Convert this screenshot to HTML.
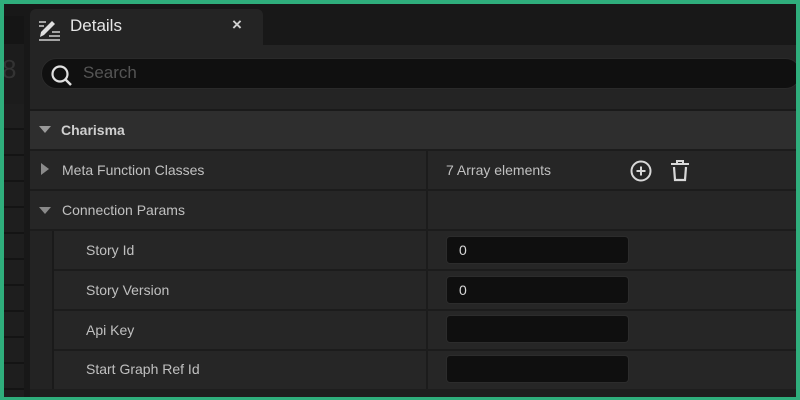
<!DOCTYPE html>
<html><head><style>
*{margin:0;padding:0;box-sizing:border-box}
body{width:800px;height:400px;background:#2fae7c;overflow:hidden;font-family:"Liberation Sans",sans-serif;position:relative}
.frame{position:absolute;left:4px;top:4px;width:792px;height:393px;background:#181818;overflow:hidden}
.abs{position:absolute}
.lbl{position:absolute;color:#c0c0c0;font-size:14px}
</style></head><body>
<div class="frame">
 <div class="abs" style="left:0;top:12px;width:20px;height:381px;background:#151515"></div>
 <div class="abs" style="left:0;top:40px;width:20px;height:60px;background:#1c1c1c"></div>
 <div class="abs" style="left:-2px;top:50px;color:#333;font-size:26px">8</div>
 <div class="abs" style="left:0;top:100px;width:20px;height:293px;background:repeating-linear-gradient(#1e1e1e 0 24px,#141414 24px 26px)"></div>
 <div class="abs" style="left:26px;top:5px;width:233px;height:40px;background:#242424;border-radius:6px 6px 0 0"></div>
 <svg class="abs" style="left:32px;top:12px" width="28" height="26" viewBox="0 0 28 26">
  <path d="M4 21 L5 16 L16 5 L19 8 L8 19 Z" fill="#e0e0e0"/>
  <path d="M3 24 H24 M13 20 H24 M16 16 H24 M3 6 H10 M3 10 H8" stroke="#cfcfcf" stroke-width="1.5"/>
 </svg>
 <div class="abs" style="left:66px;top:12px;color:#e6e6e6;font-size:17px">Details</div>
 <div class="abs" style="left:228px;top:11px;color:#d0d0d0;font-size:17px;font-weight:bold">×</div>
 <div class="abs" style="left:26px;top:41px;width:766px;height:352px;background:#242424"></div>
 <div class="abs" style="left:37px;top:54px;width:760px;height:31px;background:#101010;border-radius:16px;border:1px solid #2a2a2a"></div>
 <svg class="abs" style="left:45px;top:59px" width="26" height="26" viewBox="0 0 26 26"><circle cx="11" cy="11" r="7.5" fill="none" stroke="#e0e0e0" stroke-width="2.2"/><path d="M16.5 16.5 L22 22" stroke="#e0e0e0" stroke-width="2.5"/></svg>
 <div class="abs" style="left:79px;top:59px;color:#555;font-size:17px">Search</div>
 <div class="abs" style="left:26px;top:105px;width:766px;height:2px;background:#1a1a1a"></div>
 <div class="abs" style="left:26px;top:107px;width:766px;height:38px;background:#2e2e2e"></div>
 <div class="abs" style="left:35px;top:122px;width:0;height:0;border-left:6px solid transparent;border-right:6px solid transparent;border-top:7px solid #9a9a9a"></div>
 <div class="lbl" style="left:57px;top:118px;font-weight:bold;color:#cfcfcf">Charisma</div>
 <div class="abs" style="left:26px;top:145px;width:766px;height:248px;background:#262626"></div>
 <div class="abs" style="left:26px;top:145px;width:766px;height:2px;background:#1c1c1c"></div>
 <div class="abs" style="left:26px;top:185px;width:766px;height:2px;background:#1c1c1c"></div>
 <div class="abs" style="left:26px;top:225px;width:766px;height:2px;background:#1c1c1c"></div>
 <div class="abs" style="left:26px;top:265px;width:766px;height:2px;background:#1c1c1c"></div>
 <div class="abs" style="left:26px;top:305px;width:766px;height:2px;background:#1c1c1c"></div>
 <div class="abs" style="left:26px;top:345px;width:766px;height:2px;background:#1c1c1c"></div>
 <div class="abs" style="left:26px;top:385px;width:766px;height:8px;background:#1e1e1e"></div>
 <div class="abs" style="left:422px;top:145px;width:2px;height:240px;background:#1c1c1c"></div>
 <div class="abs" style="left:26px;top:227px;width:24px;height:158px;background:#232323;border-right:2px solid #1a1a1a"></div>
 <div class="abs" style="left:37px;top:159px;width:0;height:0;border-top:6px solid transparent;border-bottom:6px solid transparent;border-left:8px solid #8a8a8a"></div>
 <div class="lbl" style="left:58px;top:158px">Meta Function Classes</div>
 <div class="lbl" style="left:442px;top:158px">7 Array elements</div>
 <svg class="abs" style="left:625px;top:155px" width="24" height="24" viewBox="0 0 24 24"><circle cx="12" cy="12" r="9.5" fill="none" stroke="#d8d8d8" stroke-width="2"/><path d="M12 7.5V16.5M7.5 12H16.5" stroke="#d8d8d8" stroke-width="2"/></svg>
 <svg class="abs" style="left:664px;top:154px" width="24" height="26" viewBox="0 0 24 26"><path d="M3 6H21M9 6V3H15V6" fill="none" stroke="#d8d8d8" stroke-width="2"/><path d="M6 9 L7 22 H17 L18 9" fill="none" stroke="#d8d8d8" stroke-width="2.2"/></svg>
 <div class="abs" style="left:35px;top:203px;width:0;height:0;border-left:6px solid transparent;border-right:6px solid transparent;border-top:7px solid #8a8a8a"></div>
 <div class="lbl" style="left:58px;top:198px">Connection Params</div>
 <div class="lbl" style="left:82px;top:238px">Story Id</div>
 <div class="lbl" style="left:82px;top:278px">Story Version</div>
 <div class="lbl" style="left:82px;top:318px">Api Key</div>
 <div class="lbl" style="left:82px;top:357px">Start Graph Ref Id</div>
 <div class="abs" style="left:442px;top:232px;width:183px;height:28px;background:#0f0f0f;border-radius:4px;border:1px solid #2c2c2c;color:#d8d8d8;font-size:14px;padding:5px 12px">0</div>
 <div class="abs" style="left:442px;top:272px;width:183px;height:28px;background:#0f0f0f;border-radius:4px;border:1px solid #2c2c2c;color:#d8d8d8;font-size:14px;padding:5px 12px">0</div>
 <div class="abs" style="left:442px;top:311px;width:183px;height:28px;background:#0f0f0f;border-radius:4px;border:1px solid #2c2c2c"></div>
 <div class="abs" style="left:442px;top:351px;width:183px;height:28px;background:#0f0f0f;border-radius:4px;border:1px solid #2c2c2c"></div>
</div>
</body></html>
